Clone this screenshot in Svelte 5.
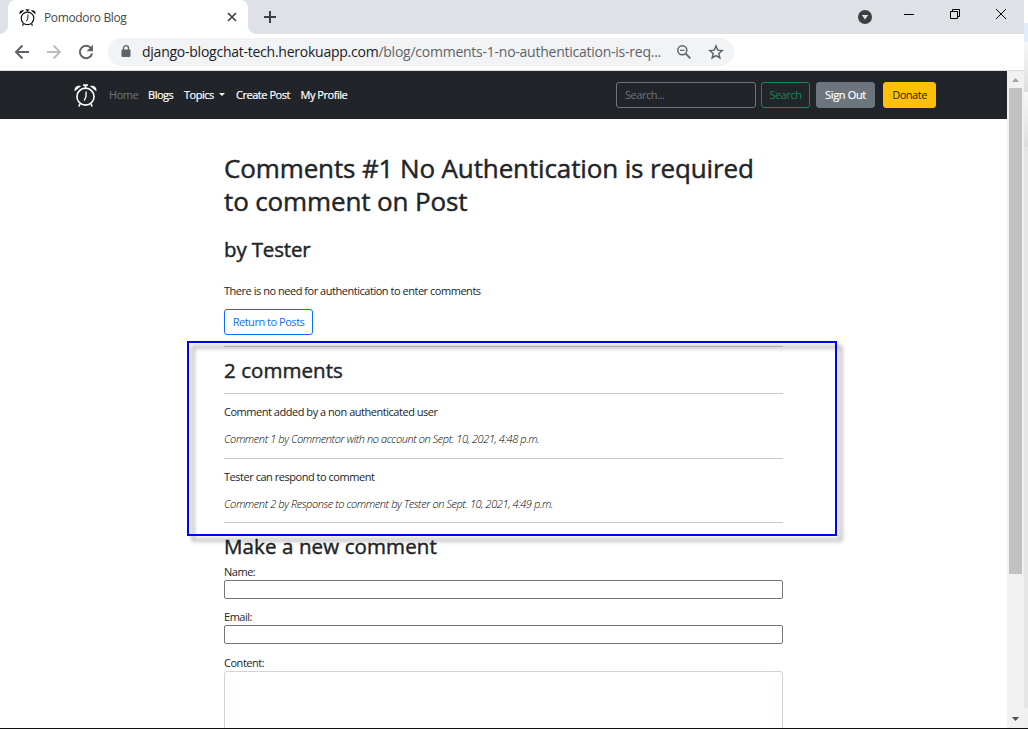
<script>
  const comments = [
    { body: 'Comment added by a non authenticated user', meta: 'Comment 1 by Commentor with no account on Sept. 10, 2021, 4:48 p.m.' },
    { body: 'Tester can respond to comment', meta: 'Comment 2 by Response to comment by Tester on Sept. 10, 2021, 4:49 p.m.' }
  ];
</script>

{#snippet clock(size)}
  <svg width={size} height={size} viewBox="0 0 24 24" fill="none" stroke="currentColor">
    <circle cx="12" cy="13.2" r="8.9" stroke-width="1.7" />
    <path d="M12.7 7.8 12.4 13.5 10.600 17.300" stroke-width="1.400" />
    <path d="M9.500 1.200h5M12 1v3" stroke-width="1.800" />
    <path d="M6.200 21 5 23.500M17.800 21l1.200 2.500" stroke-width="1.700" />
    <path d="M.8 7.500C-.4 3.500 3.200.6 7.400 2.200ZM23.200 7.500C24.400 3.500 20.800.6 16.600 2.200Z" fill="currentColor" stroke="none" />
  </svg>
{/snippet}

<div class="screen">
  <div class="window">
    <div class="tabs">
      <div class="tab">
        {@render clock(17)}
        <span class="tab-title">Pomodoro Blog</span>
        <svg class="tab-close" width="10" height="10" viewBox="0 0 10 10"><path d="m1 1 8 8M9 1 1 9" stroke="#3c4043" stroke-width="1.7" /></svg>
      </div>
      <svg class="plus" width="12" height="12" viewBox="0 0 12 12"><path d="M6 0v12M0 6h12" stroke="#3c4043" stroke-width="2" /></svg>
      <div class="controls">
        <svg width="14" height="14" viewBox="0 0 14 14"><circle cx="7" cy="7" r="7" fill="#3c4043" /><path d="M3.8 5h6.4L7 9.6Z" fill="#dee1e6" /></svg>
        <svg class="win" width="10" height="10" viewBox="0 0 10 10"><path d="M0 5.5h10" stroke="#000" /></svg>
        <svg class="win" width="10" height="10" viewBox="0 0 10 10" fill="none" stroke="#000"><path d="M.5 2.5h7v7h-7ZM2.5 2.5v-2h7v7h-2" /></svg>
        <svg class="win" width="10" height="10" viewBox="0 0 10 10"><path d="m0 0 10 10M10 0 0 10" stroke="#000" /></svg>
      </div>
    </div>
    <div class="toolbar">
      <svg width="16" height="16" viewBox="0 0 16 16" fill="none" stroke="#5f6368" stroke-width="2"><path d="M15 8H2M8.5 1.5 2 8l6.500 6.500" /></svg>
      <svg width="16" height="16" viewBox="0 0 16 16" fill="none" stroke="#babcbe" stroke-width="2"><path d="M1 8h13M7.500 1.500 14 8l-6.500 6.500" /></svg>
      <svg width="16" height="16" viewBox="0 0 16 16"><path d="M13 4.200A6.200 6.200 0 1 0 14.100 9.500" fill="none" stroke="#5f6368" stroke-width="2" /><path d="M15 .8v6.400H8.600Z" fill="#5f6368" /></svg>
      <div class="address">
        <svg width="10" height="13" viewBox="0 0 10 13"><rect x="0.500" y="4.500" width="9" height="7.500" rx="1" fill="#5f6368" /><path d="M2.500 5V3.200a2.500 2.500 0 0 1 5 0V5" fill="none" stroke="#5f6368" stroke-width="1.300" /></svg>
        <span class="url"><b>django-blogchat-tech.herokuapp.com</b>/blog/comments-1-no-authentication-is-req...</span>
        <svg class="lens" width="14" height="14" viewBox="0 0 14 14" fill="none" stroke="#5f6368"><circle cx="5.300" cy="5.300" r="4.500" stroke-width="1.500" /><path d="m8.700 8.700 4.600 4.600" stroke-width="1.800" /><path d="M3 5.300h4.600" stroke-width="1.200" /></svg>
        <svg width="16" height="16" viewBox="0 0 24 24"><path d="m12 3 2.600 6.200 6.800.6-5.200 4.400 1.600 6.600-5.800-3.500-5.800 3.500 1.600-6.600-5.200-4.400 6.800-.6Z" fill="none" stroke="#5f6368" stroke-width="2.200" /></svg>
      </div>
    </div>

    <div class="view">
      <div class="page">
        <nav>
          <span class="brand">{@render clock(23)}</span>
          <div class="links">
            <span class="dim">Home</span>
            <span>Blogs</span>
            <span class="topics">Topics <i></i></span>
            <span class="create">Create Post</span>
            <span>My Profile</span>
          </div>
          <div class="search">Search...</div>
          <div class="btn green">Search</div>
          <div class="btn gray">Sign Out</div>
          <div class="btn yellow">Donate</div>
        </nav>
        <main>
          <h1>Comments #1 No Authentication is required<br />to comment on Post</h1>
          <h2 class="author">by Tester</h2>
          <p class="post">There is no need for authentication to enter comments</p>
          <div class="btn blue">Return to Posts</div>
          <hr class="first" />
          <h2 class="count">2 comments</h2>
          <hr />
          {#each comments as c}
            <div class="comment">
              <p>{c.body}</p>
              <p class="meta">{c.meta}</p>
            </div>
            <hr />
          {/each}
          <h2 class="new">Make a new comment</h2>
          <label for="name">Name:</label>
          <div class="input" id="name"></div>
          <label for="email">Email:</label>
          <div class="input" id="email"></div>
          <label class="content" for="content">Content:</label>
          <div class="textarea" id="content"></div>
        </main>
        <div class="highlight"></div>
      </div>
      <div class="scroll">
        <svg width="17" height="17" viewBox="0 0 17 17"><path d="M5 11h7L8.500 7Z" fill="#a3a3a3" /></svg>
        <div class="thumb"></div>
        <svg class="down" width="17" height="17" viewBox="0 0 17 17"><path d="M5 6h7l-3.500 4Z" fill="#505050" /></svg>
      </div>
    </div>
  </div>
  <div class="edge"><div class="e1"></div><div class="e2"></div><div class="e3"></div><div class="e4"></div><div class="e5"></div></div>
</div>

<style>
  :global(body) { overflow: hidden; background: #fff; }
  .screen { display: flex; width: 1028px; height: 729px; overflow: hidden; border-bottom: 1px solid #111; font-family: "Open Sans", "Noto Sans", sans-serif; color: #212529; }
  .screen, .screen * { box-sizing: border-box; }
  svg { display: block; flex: none; }
  .window { width: 1024px; flex: none; display: flex; flex-direction: column; }
  .tabs { height: 34px; flex: none; background: #dee1e6; display: flex; align-items: center; }
  .tab { position: relative; width: 240px; height: 34px; margin-left: 8px; padding: 0 11px; display: flex; align-items: center; background: #fff; border-radius: 8px 8px 0 0; color: #111; }
  .tab::before, .tab::after { content: ""; position: absolute; bottom: 0; width: 8px; height: 8px; }
  .tab::before { left: -8px; background: radial-gradient(circle at 0 0, #dee1e6 7.500px, #fff 8px); }
  .tab::after { right: -8px; background: radial-gradient(circle at 100% 0, #dee1e6 7.500px, #fff 8px); }
  .tab-title { margin-left: 8px; font-size: 12px; letter-spacing: -0.350px; color: #45494d; white-space: nowrap; }
  .tab-close { margin-left: auto; }
  .plus { margin-left: 16px; }
  .controls { margin-left: auto; display: flex; align-items: center; padding-right: 18px; }
  .win { margin: -6px 0 0 36px; }
  .win:nth-child(2) { margin-left: 32px; }
  .toolbar { height: 37px; flex: none; display: flex; align-items: center; gap: 16px; padding: 0 14px 1px; border-bottom: 1px solid #d9dbde; }
  .address { width: 626px; height: 28px; margin-left: -2px; padding: 0 10px 0 13px; display: flex; align-items: center; border-radius: 14px; background: #f1f3f4; }
  .url { width: 521px; margin-left: 11px; font-size: 14px; letter-spacing: -0.245px; white-space: nowrap; color: #5f6368; }
  .url b { font-weight: 400; color: #202124; }
  .lens { margin: 0 17px 0 auto; }
  .view { display: flex; flex: 1; min-height: 0; }
  .page { position: relative; width: 1007px; overflow: hidden; font-size: 11px; line-height: 17px; letter-spacing: -0.470px; }
  nav { height: 48px; background: #212529; display: flex; align-items: center; padding-left: 74px; white-space: nowrap; color: #fff; }
  .brand { width: 35px; }
  .links { width: 507px; margin-top: -2px; display: grid; grid-template-columns: 39px 36px 52px 64.500px auto; }
  .links span:not(.dim) { -webkit-text-stroke: 0.200px #fff; }
  .dim { color: #6c757d; }
  .topics { display: flex; align-items: center; gap: 5px; }
  .topics i { border: 3.500px solid transparent; border-top-color: #fff; border-bottom: 0; }
  .search { width: 140px; height: 26px; padding: 0 8px; border: 1px solid #6c757d; border-radius: 3px; line-height: 24px; color: #6c757d; }
  .btn { height: 26px; flex: none; border: 1px solid; border-radius: 3px; text-align: center; line-height: 24px; white-space: nowrap; }
  .green { width: 49px; margin-left: 5px; color: #198754; }
  .gray { width: 59px; margin-left: 6px; background: #6c757d; border-color: #6c757d; letter-spacing: -0.350px; -webkit-text-stroke: 0.200px #fff; }
  .yellow { width: 53px; margin-left: 8px; background: #ffc107; border-color: #ffc107; color: #212529; }
  .blue { width: 89px; margin-bottom: 11px; color: #0d6efd; }
  main { width: 559px; margin-left: 224px; padding-top: 33px; white-space: nowrap; }
  h1, h2, p { margin: 0; }
  h1, h2 { font-weight: 500; -webkit-text-stroke: 0.450px #212529; }
  h1 { height: 65px; font-size: 26px; line-height: 32.500px; letter-spacing: -0.130px; }
  h2 { height: 26px; font-size: 20.500px; line-height: 26px; letter-spacing: 0.050px; }
  .author { margin-top: 19px; letter-spacing: -0.150px; }
  .post { margin: 20px 0 10px; }
  hr { height: 1px; margin: 0; border: 0; background: #c8c8c8; }
  .count { margin: 10px 0; }
  p { height: 17px; }
  .comment { display: flex; flex-direction: column; gap: 10px; padding: 9px 0 11px; }
  hr + .comment ~ .comment { padding-bottom: 10px; }
  .meta { font-style: italic; font-weight: 300; color: #000; letter-spacing: -0.415px; }
  .new { margin: 10px 0 4px; letter-spacing: 0.110px; }
  label { display: block; height: 17px; }
  .input { height: 19px; margin-bottom: 9px; border: 1px solid #767676; border-radius: 2px; }
  .content { margin-top: 10px; }
  .textarea { height: 80px; border: 1px solid #ced4da; border-radius: 3px; }
  .highlight { position: absolute; left: 187px; top: 270px; width: 650px; height: 195px; border: 2px solid #00f; filter: drop-shadow(5px 5px 2px rgba(0, 0, 0, 0.420)); }
  .scroll { width: 17px; background: #f1f1f1; display: flex; flex-direction: column; }
  .thumb { width: 13px; height: 486px; margin-left: 2px; background: #c1c1c1; }
  .down { margin-top: auto; }
  .edge { width: 4px; background: #f0f0f0; display: flex; flex-direction: column; }
  .e1 { height: 23px; background: #fff; }
  .e2 { height: 19px; background: #e3ebf6; }
  .e3 { height: 50px; background: linear-gradient(#f7f7f7, #ddd); }
  .e4 { height: 55px; background: linear-gradient(#f8f8f8, #ddd); }
  .e5 { height: 561px; background: #e5e5e5; }
</style>
